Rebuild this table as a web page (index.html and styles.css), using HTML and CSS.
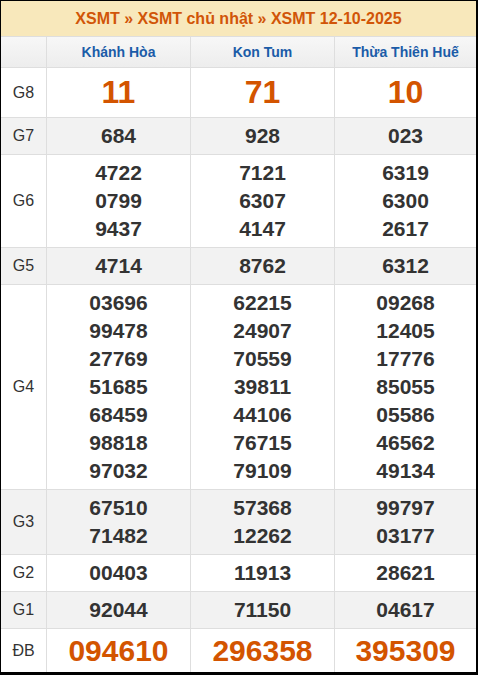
FILE: index.html
```html
<!DOCTYPE html>
<html lang="vi">
<head>
<meta charset="utf-8">
<title>XSMT 12-10-2025</title>
<link rel="stylesheet" href="styles.css">
</head>
<body>
<div class="board">
  <div class="title">XSMT » XSMT chủ nhật » XSMT 12-10-2025</div>
  <div class="cell head"></div>
  <div class="cell head prov">Khánh Hòa</div>
  <div class="cell head prov">Kon Tum</div>
  <div class="cell head prov">Thừa Thiên Huế</div>

  <div class="cell lbl g8">G8</div>
  <div class="cell big g8"><div>11</div></div>
  <div class="cell big g8"><div>71</div></div>
  <div class="cell big g8"><div>10</div></div>

  <div class="cell lbl alt">G7</div>
  <div class="cell num alt"><div>684</div></div>
  <div class="cell num alt"><div>928</div></div>
  <div class="cell num alt"><div>023</div></div>

  <div class="cell lbl">G6</div>
  <div class="cell num"><div>4722</div><div>0799</div><div>9437</div></div>
  <div class="cell num"><div>7121</div><div>6307</div><div>4147</div></div>
  <div class="cell num"><div>6319</div><div>6300</div><div>2617</div></div>

  <div class="cell lbl alt">G5</div>
  <div class="cell num alt"><div>4714</div></div>
  <div class="cell num alt"><div>8762</div></div>
  <div class="cell num alt"><div>6312</div></div>

  <div class="cell lbl">G4</div>
  <div class="cell num"><div>03696</div><div>99478</div><div>27769</div><div>51685</div><div>68459</div><div>98818</div><div>97032</div></div>
  <div class="cell num"><div>62215</div><div>24907</div><div>70559</div><div>39811</div><div>44106</div><div>76715</div><div>79109</div></div>
  <div class="cell num"><div>09268</div><div>12405</div><div>17776</div><div>85055</div><div>05586</div><div>46562</div><div>49134</div></div>

  <div class="cell lbl alt">G3</div>
  <div class="cell num alt"><div>67510</div><div>71482</div></div>
  <div class="cell num alt"><div>57368</div><div>12262</div></div>
  <div class="cell num alt"><div>99797</div><div>03177</div></div>

  <div class="cell lbl">G2</div>
  <div class="cell num"><div>00403</div></div>
  <div class="cell num"><div>11913</div></div>
  <div class="cell num"><div>28621</div></div>

  <div class="cell lbl alt">G1</div>
  <div class="cell num alt"><div>92044</div></div>
  <div class="cell num alt"><div>71150</div></div>
  <div class="cell num alt"><div>04617</div></div>

  <div class="cell lbl db">ĐB</div>
  <div class="cell big db"><div>094610</div></div>
  <div class="cell big db"><div>296358</div></div>
  <div class="cell big db"><div>395309</div></div>
</div>
</body>
</html>
```
FILE: styles.css
```css
html, body {
  margin: 0;
  padding: 0;
  background: #ffffff;
}

.board {
  width: 475px;
  display: grid;
  grid-template-columns: 45px 143px 143px 141px;
  gap: 1px;
  background: #dedede;
  border-style: solid;
  border-color: #000000;
  border-width: 1px 2px 3px 1px;
  font-family: "Liberation Sans", Arial, sans-serif;
  color: #333333;
}

.title {
  grid-column: 1 / -1;
  background: #f8e8bb;
  color: #d15508;
  font-weight: bold;
  font-size: 16px;
  height: 35px;
  line-height: 35px;
  text-align: center;
}

.cell {
  background: #ffffff;
  padding: 4px 0;
  text-align: center;
  display: flex;
  flex-direction: column;
  justify-content: center;
}

.head {
  background: linear-gradient(#f7f7f7, #ededed);
  line-height: 22px;
  height: 22px;
}

.prov {
  color: #1b5ca8;
  font-weight: bold;
  font-size: 14px;
}

.lbl {
  font-size: 16px;
  line-height: 28px;
}

.num {
  font-size: 21px;
  font-weight: bold;
  line-height: 28px;
}

.big {
  font-weight: bold;
  color: #d35400;
}

.g8 {
  line-height: 41px;
}

.big.g8 {
  font-size: 32px;
}

.db {
  line-height: 35px;
}

.big.db {
  font-size: 30px;
}

.alt {
  background: #f2f2f2;
}
```
